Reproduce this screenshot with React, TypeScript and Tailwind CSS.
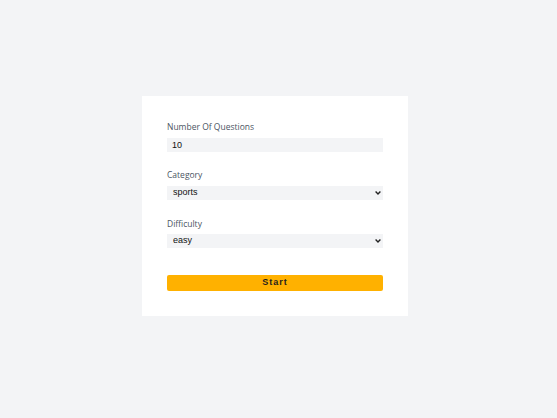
function Chevron() {
  return (
    <svg
      viewBox="0 0 6 4"
      className="pointer-events-none absolute right-[2px] top-[5px] h-[4px] w-[6px]"
      fill="none"
      stroke="#222"
      strokeWidth="1.4"
    >
      <path d="M0.6 0.6 L3 3 L5.4 0.6" />
    </svg>
  );
}

export default function App() {
  return (
    <div className="min-h-[418px] bg-[#f3f4f6] pt-[96px] pl-[142px]">
      <form
        className="w-[266px] bg-white px-[25px] pt-[24px] pb-[25px]"
        onSubmit={(e) => e.preventDefault()}
      >
        <div className="flex flex-col">
          <label className="text-[8.5px] leading-[14px] text-[#4b5563] font-['Open_Sans',sans-serif]">
            Number Of Questions
          </label>
          <input
            type="number"
            defaultValue={10}
            className="mt-[4px] h-[14px] w-full bg-[#f3f4f6] px-[5px] text-[9px] text-[#111] outline-none font-['Liberation_Sans',sans-serif]"
          />
        </div>

        <div className="mt-[16px] flex flex-col">
          <label className="text-[8.5px] leading-[14px] text-[#4b5563] font-['Open_Sans',sans-serif]">
            Category
          </label>
          <div className="relative mt-[4px]">
            <select
              defaultValue="sports"
              className="block h-[14px] w-full appearance-none bg-[#f3f4f6] px-[6px] text-[9px] text-[#111] outline-none font-['Liberation_Sans',sans-serif]"
            >
              <option value="sports">sports</option>
              <option value="history">history</option>
              <option value="politics">politics</option>
            </select>
            <Chevron />
          </div>
        </div>

        <div className="mt-[17px] flex flex-col">
          <label className="text-[8.5px] leading-[14px] text-[#4b5563] font-['Open_Sans',sans-serif]">
            Difficulty
          </label>
          <div className="relative mt-[3px]">
            <select
              defaultValue="easy"
              className="block h-[14px] w-full appearance-none bg-[#f3f4f6] px-[6px] text-[9px] text-[#111] outline-none font-['Liberation_Sans',sans-serif]"
            >
              <option value="easy">easy</option>
              <option value="medium">medium</option>
              <option value="hard">hard</option>
            </select>
            <Chevron />
          </div>
        </div>

        <button
          type="submit"
          className="mt-[27px] h-[16px] w-full rounded-[2px] bg-[#ffb100] text-[9px] font-bold tracking-[1px] text-[#1f1f1f] font-['Liberation_Sans',sans-serif]"
        >
          Start
        </button>
      </form>
    </div>
  );
}
